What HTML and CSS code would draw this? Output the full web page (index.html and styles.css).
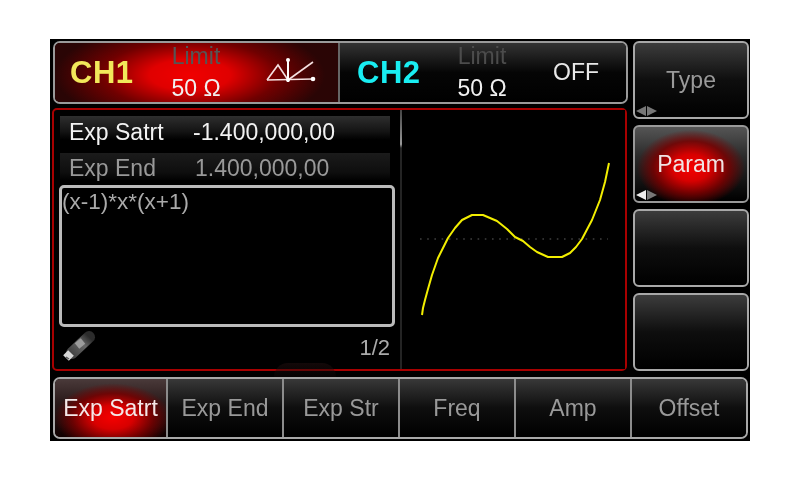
FILE: index.html
```html
<!DOCTYPE html>
<html>
<head>
<meta charset="utf-8">
<title>Arbitrary Expression</title>
<link rel="stylesheet" href="styles.css">
</head>
<body>
<div class="screen">
  <div class="upper">
    <div class="left">
      <div class="channels">
        <div class="channel ch1">
          <span class="ch-name yellow">CH1</span>
          <div class="ch-stack"><span class="limit">Limit</span><span class="ohm">50 Ω</span></div>
          <svg class="ch-icon" width="52" height="28" viewBox="0 0 52 28">
            <path d="M1 23L47 22" class="w1"/>
            <path d="M1 23L12 8L22 23" class="w1"/>
            <path d="M22 2V25" class="w2"/>
            <path d="M22 23L47 5" class="w1"/>
            <circle cx="22" cy="3" r="2" class="dot"/>
            <circle cx="22" cy="23" r="2" class="dot"/>
            <circle cx="47" cy="22" r="2.3" class="dot"/>
          </svg>
        </div>
        <div class="channel ch2">
          <span class="ch-name cyan">CH2</span>
          <div class="ch-stack"><span class="limit">Limit</span><span class="ohm">50 Ω</span></div>
          <span class="off">OFF</span>
        </div>
      </div>
      <div class="panel">
        <div class="params">
          <div class="row active"><span class="row-label">Exp Satrt</span><span class="row-value">-1.400,000,00</span></div>
          <div class="row dim"><span class="row-label">Exp End</span><span class="row-value v2">1.400,000,00</span></div>
          <div class="expr">(x-1)*x*(x+1)</div>
          <div class="foot">
            <svg class="usb" width="38" height="36" viewBox="0 0 38 36">
              <defs>
                <linearGradient id="u" x1="0" y1="1" x2="1" y2="0">
                  <stop offset="0" stop-color="#444"/>
                  <stop offset="0.6" stop-color="#666"/>
                  <stop offset="1" stop-color="#2c2c2c"/>
                </linearGradient>
              </defs>
              <path d="M12 25L29 9" stroke="url(#u)" stroke-width="12" stroke-linecap="round" fill="none"/>
              <path d="M17 18L23 13" stroke="#9c9c9c" stroke-width="7" fill="none"/>
              <path d="M11 25L6 30" stroke="#d6d6d6" stroke-width="8" fill="none"/>
              <path d="M6 29L9 31" stroke="#555" stroke-width="1.4" fill="none"/>
            </svg>
            <span class="page">1/2</span>
          </div>
        </div>
        <div class="scope">
          <svg class="wave" width="223" height="258" viewBox="402 110 223 258">
            <path class="zero" d="M420 239H608"/>
            <path class="curve" d="M422 315L423 308L425 300L428 289L432 275L438 258L448 238L455 228L462 220L472 215L483 215L497 221L507 229L515 237L523 241L530 247L537 252L548 257L562 257L570 253L576 247L582 239L592 220L600 200L605 182L609 163"/>
          </svg>
        </div>
        <span class="smudge"></span>
      </div>
    </div>
    <div class="side">
      <div class="side-btn"><span class="side-text">Type</span><span class="arrows"><i class="al"></i><i class="ar"></i></span></div>
      <div class="side-btn on"><span class="side-text">Param</span><span class="arrows lit"><i class="al"></i><i class="ar"></i></span></div>
      <div class="side-btn"></div>
      <div class="side-btn"></div>
    </div>
  </div>
  <div class="softkeys">
    <div class="key on">Exp Satrt</div>
    <div class="key">Exp End</div>
    <div class="key">Exp Str</div>
    <div class="key">Freq</div>
    <div class="key">Amp</div>
    <div class="key">Offset</div>
  </div>
</div>
</body>
</html>
```
FILE: styles.css
```css
* { box-sizing: border-box; }
html, body { margin: 0; height: 100%; background: #fff; overflow: hidden; }
body { padding: 39px 50px 0; font-family: "Liberation Sans", Arial, sans-serif; }

.screen {
  width: 700px;
  height: 402px;
  background: #000;
  padding: 2px 1px 2px 2px;
  display: flex;
  flex-direction: column;
  gap: 6px;
  filter: blur(0.6px);
}

.upper { display: flex; gap: 5px; height: 330px; }
.left { width: 576px; display: flex; flex-direction: column; gap: 4px; }

.channels {
  display: flex;
  height: 63px;
  border: 2px solid #9a9a9a;
  border-radius: 7px;
  overflow: hidden;
  margin-left: 1px;
}
.channel { position: relative; display: flex; align-items: center; height: 100%; }
.ch1 {
  width: 285px;
  padding-left: 15px;
  border-right: 2px solid #666;
  background: radial-gradient(ellipse 135px 52px at 135px 32px, #f00000 0%, #e00000 30%, #700000 65%, #2a0505 100%);
  background-color: #2a0505;
}
.ch2 {
  flex: 1;
  padding-left: 17px;
  background: linear-gradient(#333 0%, #050505 50%, #000 100%);
}
.ch-name { font-weight: bold; font-size: 31px; width: 100px; letter-spacing: 0.5px; }
.ch2 .ch-name { width: 99px; }
.yellow { color: #f2e85a; }
.cyan { color: #19eef2; }
.ch-stack { display: flex; flex-direction: column; align-items: center; width: 52px; margin-top: 4px; }
.limit { font-size: 23px; line-height: 27px; color: #555; }
.ohm { font-size: 23px; line-height: 37px; color: #f0f0f0; }
.ch2 .limit { color: #4c4c4c; }
.ch-icon { margin-left: 44px; margin-top: -3px; }
.w1 { fill: none; stroke: #f4e0e0; stroke-width: 1.6; }
.w2 { fill: none; stroke: #fff; stroke-width: 2; }
.dot { fill: #fff; }
.off { font-size: 23px; color: #e8e8e8; margin-left: 45px; }

.panel {
  position: relative;
  flex: 1;
  display: flex;
  border: 2px solid #a80000;
  border-radius: 5px;
  margin-right: 1px;
}
.params { width: 346px; padding: 6px 5px 0 5px; display: flex; flex-direction: column; }
.row {
  display: flex;
  align-items: center;
  height: 28px;
  margin-right: 5px;
  margin-left: 1px;
  padding-left: 9px;
  font-size: 23px;
  line-height: 24px;
  background: linear-gradient(#2e2e2e 0%, #141414 55%, #000 85%);
}
.row.active { color: #f2f2f2; margin-bottom: 9px; padding-top: 4px; }
.row.dim { color: #999; padding-top: 2px; background: linear-gradient(#1b1b1b, #0e0e0e 70%, #000); }
.row-label { width: 124px; }
.v2 { margin-left: 2px; }
.expr {
  height: 142px;
  margin-top: 4px;
  padding: 2px 0 0 0;
  border: 3px solid #bbb;
  border-radius: 5px;
  background: #000;
  color: #aaa;
  font-size: 22.5px;
  line-height: 24px;
}
.foot { flex: 1; display: flex; justify-content: space-between; align-items: flex-start; }
.usb { margin: 1px 0 0 1px; }
.page { font-size: 22px; color: #aaa; margin: 8px 5px 0 0; }

.scope {
  flex: 1;
  border-left: 2px solid #242424;
  position: relative;
  background: #000;
}
.scope::before {
  content: "";
  position: absolute;
  left: -2px;
  top: 0;
  width: 2px;
  height: 38px;
  background: linear-gradient(#444, #999 90%, #222);
}
.wave { display: block; }
.zero { fill: none; stroke: #5e5e5e; stroke-width: 1; stroke-dasharray: 1.6 5.6; }
.curve { fill: none; stroke: #f2ee00; stroke-width: 2; stroke-linejoin: round; }
.smudge {
  position: absolute;
  left: 220px;
  bottom: -8px;
  width: 62px;
  height: 14px;
  border-radius: 30px 30px 0 0;
  background: linear-gradient(#2a1414, #0c0505);
  opacity: 0.45;
}

.side { width: 116px; display: flex; flex-direction: column; gap: 6px; }
.side-btn {
  position: relative;
  height: 79px;
  display: flex;
  align-items: center;
  justify-content: center;
  border: 2px solid #a8a8a8;
  border-radius: 6px;
  background: linear-gradient(#3c3c3c 0%, #0e0e0e 50%, #000 100%);
  font-size: 23px;
  color: #9a9a9a;
}
.side-btn.on {
  color: #f0e4e4;
  background:
    radial-gradient(ellipse 54px 38px at 50% 55%, #f50000 0%, #d80000 35%, rgba(120,0,0,0.85) 70%, rgba(40,0,0,0) 100%),
    linear-gradient(#555 0%, #2a2a2a 40%, #000 100%);
  border-color: #999;
}
.arrows { position: absolute; left: 1px; bottom: 1px; display: flex; gap: 1px; }
.al, .ar { display: block; width: 0; height: 0; border-top: 5px solid transparent; border-bottom: 5px solid transparent; }
.al { border-right: 10px solid #777; }
.ar { border-left: 10px solid #777; }
.lit .al { border-right-color: #eee; }

.softkeys {
  display: flex;
  height: 62px;
  width: 695px;
  margin-left: 1px;
  border: 2px solid #a8a8a8;
  border-radius: 7px;
  overflow: hidden;
}
.key {
  flex: 1;
  display: flex;
  align-items: center;
  justify-content: center;
  border-left: 2px solid #8c8c8c;
  background: linear-gradient(#383838 0%, #0e0e0e 50%, #000 100%);
  font-size: 23px;
  color: #999;
}
.key:first-child { border-left: 0; flex: 0 0 111px; }
.key.on {
  color: #f4e8e8;
  background:
    radial-gradient(ellipse 58px 34px at 52% 66%, #f50000 0%, #d80000 35%, rgba(120,0,0,0.85) 70%, rgba(40,0,0,0) 100%),
    linear-gradient(#4a3a3a 0%, #2a1a1a 40%, #100000 100%);
}
```
